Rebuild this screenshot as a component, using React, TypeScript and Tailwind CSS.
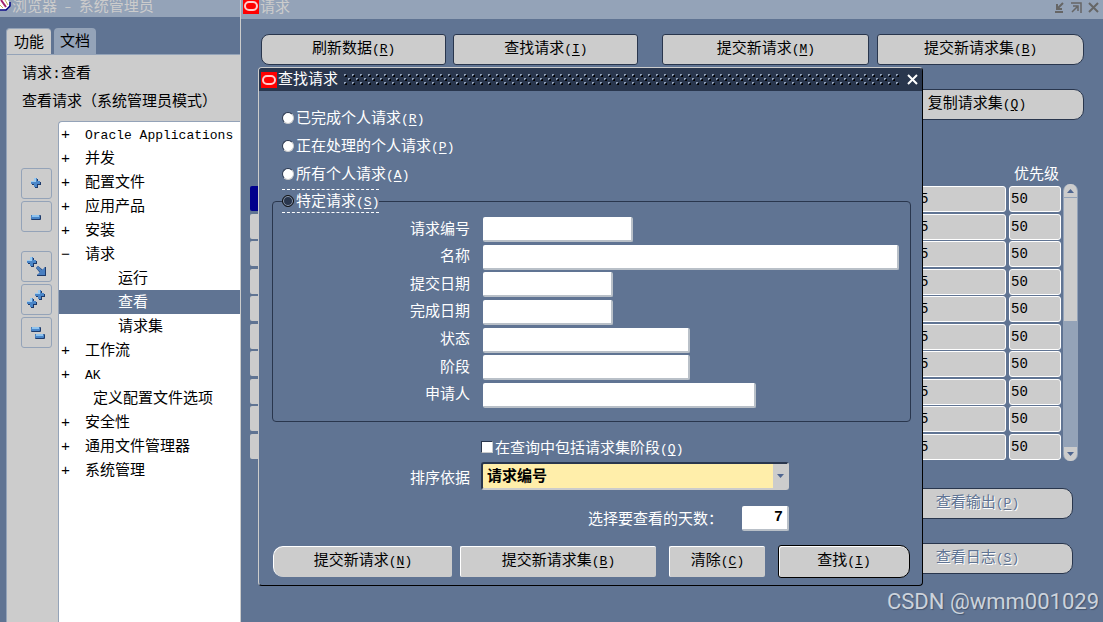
import { useState } from 'react';
import type { ReactNode } from 'react';

type TreeNode = {
  label: string;
  mark?: '+' | '−';
  level?: 1 | 2;
};

const tree: TreeNode[] = [
  { label: 'Oracle Applications', mark: '+' },
  { label: '并发', mark: '+' },
  { label: '配置文件', mark: '+' },
  { label: '应用产品', mark: '+' },
  { label: '安装', mark: '+' },
  { label: '请求', mark: '−' },
  { label: '运行', level: 2 },
  { label: '查看', level: 2 },
  { label: '请求集', level: 2 },
  { label: '工作流', mark: '+' },
  { label: 'AK', mark: '+' },
  { label: '定义配置文件选项', level: 1 },
  { label: '安全性', mark: '+' },
  { label: '通用文件管理器', mark: '+' },
  { label: '系统管理', mark: '+' },
];

const scopes = [
  { id: 'completed', label: '已完成个人请求', hotkey: 'R' },
  { id: 'running', label: '正在处理的个人请求', hotkey: 'P' },
  { id: 'all', label: '所有个人请求', hotkey: 'A' },
];

const fields = [
  { id: 'requestId', label: '请求编号', width: 'w-[150px]' },
  { id: 'name', label: '名称', width: 'w-[416px]' },
  { id: 'submitted', label: '提交日期', width: 'w-[130px]' },
  { id: 'finished', label: '完成日期', width: 'w-[130px]' },
  { id: 'status', label: '状态', width: 'w-[207px]' },
  { id: 'phase', label: '阶段', width: 'w-[207px]' },
  { id: 'requestor', label: '申请人', width: 'w-[273px]' },
];

const rows = Array.from({ length: 10 }, (_, i) => i);

function Hotkey({ char }: { char: string }) {
  return (
    <span className="text-[13px]">
      (<span className="underline underline-offset-2">{char}</span>)
    </span>
  );
}

function OracleIcon() {
  return (
    <svg width="16" height="16" viewBox="0 0 16 16" className="shrink-0">
      <rect width="16" height="16" fill="#f00" />
      <rect x="2" y="4" width="12" height="8" rx="4" fill="none" stroke="#fcc" strokeWidth="2" />
    </svg>
  );
}

function PlusShape({ x, y }: { x: number; y: number }) {
  return (
    <g transform={`translate(${x} ${y})`}>
      <path d="M4 1h3v3h3v3h-3v3h-3v-3h-3v-3h3z" fill="#1d3a6b" />
      <path d="M3 0h3v3h3v3h-3v3h-3v-3h-3v-3h3z" fill="#4a86c8" />
      <path d="M3 0h2v4h-5v-1h3z" fill="#9ccbf0" />
    </g>
  );
}

function MinusShape({ x, y }: { x: number; y: number }) {
  return (
    <g transform={`translate(${x} ${y})`}>
      <rect x="0" y="0" width="10" height="5" rx="1" fill="#1d3a6b" />
      <rect x="0" y="0" width="9" height="4" rx="1" fill="#4a86c8" />
      <rect x="1" y="0" width="7" height="2" fill="#8fc3ee" />
    </g>
  );
}

function ToolButton({ label, children }: { label: string; children: ReactNode }) {
  return (
    <button
      type="button"
      aria-label={label}
      className="w-[31px] h-[31px] border border-[#94a3b8] rounded-[3px] flex items-center justify-center"
    >
      <svg width="29" height="29" viewBox="0 0 29 29">
        {children}
      </svg>
    </button>
  );
}

function Navigator() {
  const [selected, setSelected] = useState('查看');

  return (
    <aside className="w-[240px] shrink-0 flex flex-col">
      <header className="h-[17px] bg-[#94a3b8] text-[#ccc] flex items-start gap-px">
        <svg width="11" height="11" viewBox="0 0 11 11" className="shrink-0">
          <path d="M0 0h8l2 3-1 5-4 2.500h-5z" fill="#fff" />
          <path d="M10 2v4l-4 4h-6" fill="none" stroke="#000080" strokeWidth="1.500" />
          <path d="M1 0l5 7" stroke="#a0206a" strokeWidth="2" />
          <path d="M5 0l3 5M0 5l3 3" stroke="#c9b458" />
        </svg>
        <h1 className="leading-4 whitespace-pre">
          浏览器<span className="text-[12px]"> – </span>系统管理员
        </h1>
      </header>

      <div className="flex-1 flex flex-col pl-1.5 pt-[11px]">
        <div role="tablist" className="flex gap-[3px] h-[26px]">
          <button
            type="button"
            role="tab"
            aria-selected="true"
            className="w-[45px] pt-1 bg-[#ccc] rounded-t-[4px] border-l border-t border-[#94a3b8]"
          >
            功能
          </button>
          <button type="button" role="tab" aria-selected="false" className="w-[42px] pt-1 bg-[#94a3b8] rounded-t-[4px]">
            文档
          </button>
        </div>

        <div className="flex-1 flex flex-col bg-[#ccc] border-l border-t border-[#94a3b8]">
          <div className="pl-[15px] pt-1.5 pb-1 leading-7">
            <p>请求:查看</p>
            <p>查看请求（系统管理员模式）</p>
          </div>

          <div className="flex-1 flex">
            <div className="w-[51px] shrink-0 pt-[47px] pl-3.5 flex flex-col gap-[19px]">
              <div className="flex flex-col gap-0.5">
                <ToolButton label="展开">
                  <PlusShape x={9} y={9} />
                </ToolButton>
                <ToolButton label="折叠">
                  <MinusShape x={9} y={13} />
                </ToolButton>
              </div>
              <div className="flex flex-col gap-0.5">
                <ToolButton label="展开分支">
                  <PlusShape x={5} y={5} />
                  <path d="M14 16l2-2 5 4 2-3h1v9h-9v-1l3-2z" fill="#1d3a6b" />
                  <path d="M14 16l2-2 4 4 3-3v8h-8l3-3z" fill="#4a7fc0" />
                </ToolButton>
                <ToolButton label="全部展开">
                  <PlusShape x={13} y={5} />
                  <PlusShape x={5} y={13} />
                </ToolButton>
                <ToolButton label="全部折叠">
                  <MinusShape x={9} y={9} />
                  <MinusShape x={13} y={16} />
                </ToolButton>
              </div>
            </div>

            <ul className="flex-1 bg-white border-l border-t border-[#94a3b8] rounded-tl-[4px]">
              {tree.map(node => (
                <li key={node.label} className="h-6">
                  <button
                    type="button"
                    onClick={() => setSelected(node.label)}
                    className={`w-full h-full pt-1 flex items-center whitespace-nowrap text-left ${
                      node.label === selected ? 'bg-[#607493] text-white' : ''
                    }`}
                  >
                    <span
                      className={`pl-0.5 shrink-0 ${
                        node.level === 2 ? 'w-[59px]' : node.level === 1 ? 'w-[34px]' : 'w-[26px]'
                      }`}
                    >
                      {node.mark}
                    </span>
                    <span className={/^[A-Z]/.test(node.label) ? 'text-[13px]' : ''}>{node.label}</span>
                  </button>
                </li>
              ))}
            </ul>
          </div>
        </div>
      </div>
    </aside>
  );
}

function RequestsWindow() {
  const top = 'flex-1 h-[31px] bg-[#ccc] border border-[#29364d]';
  const disabled =
    'h-[31px] w-[191px] bg-[#ccc] border border-[#29364d] rounded-[3px] rounded-r-[10px] text-[#607493] [text-shadow:1px_1px_0_#fff]';

  return (
    <main className="flex-1 min-w-0 flex flex-col border-l border-[#ccc]">
      <header className="h-[19px] bg-[#94a3b8] text-[#ccc] flex items-start pl-0.5 pr-1 overflow-hidden">
        <div className="-mt-0.5 flex gap-px">
          <OracleIcon />
          <h2 className="leading-[22px]">请求</h2>
        </div>
        <div className="ml-auto flex gap-1.5 pt-0.5 text-[#666]">
          <button type="button" aria-label="最小化">
            <svg width="11" height="11" viewBox="0 0 11 11" fill="none" stroke="currentColor" strokeWidth="2">
              <path d="M1 10h8M9 1l-5 5M3 2v5h5" />
            </svg>
          </button>
          <button type="button" aria-label="最大化">
            <svg width="11" height="11" viewBox="0 0 11 11" fill="none" stroke="currentColor" strokeWidth="2">
              <path d="M0 1h10v10M1 10l5-5M2 4h5v5" strokeWidth="1.500" />
            </svg>
          </button>
          <button type="button" aria-label="关闭">
            <svg width="11" height="11" viewBox="0 0 11 11" fill="none" stroke="currentColor" strokeWidth="2">
              <path d="M1 1l9 9M10 1l-9 9" />
            </svg>
          </button>
        </div>
      </header>

      <div className="pl-5 pr-[19px] pt-[15px] flex gap-6">
        <div className="flex-[377] flex gap-[7px]">
          <button type="button" className={`${top} rounded-[3px] rounded-l-[8px]`}>
            刷新数据<Hotkey char="R" />
          </button>
          <button type="button" className={`${top} rounded-[3px]`}>
            查找请求<Hotkey char="I" />
          </button>
        </div>
        <div className="flex-[421] flex gap-2">
          <button type="button" className={`${top} rounded-[3px]`}>
            提交新请求<Hotkey char="M" />
          </button>
          <button type="button" className={`${top} rounded-[3px] rounded-r-[10px]`}>
            提交新请求集<Hotkey char="B" />
          </button>
        </div>
      </div>

      <div className="pr-[19px] pt-6 flex justify-end">
        <button
          type="button"
          className="w-[214px] h-[31px] bg-[#ccc] border border-[#29364d] rounded-[3px] rounded-r-[10px]"
        >
          复制请求集<Hotkey char="Q" />
        </button>
      </div>

      <div className="mt-11 pl-[9px] pr-[25px] flex gap-0.5">
        <table className="flex-1 table-fixed border-separate border-spacing-0">
          <thead>
            <tr className="h-5 text-white">
              <th className="w-3"></th>
              <th></th>
              <th className="w-[90px]"></th>
              <th className="w-[55px] p-0 pl-1.5 pt-0.5 font-normal">优先级</th>
            </tr>
          </thead>
          <tbody>
            {rows.map(i => (
              <tr key={i} className={i % 2 ? 'h-7' : 'h-[27px]'}>
                <td className="p-0 pb-0.5">
                  <div className={`h-[25px] rounded-l-[2px] ${i === 0 ? 'bg-[#00008c]' : 'bg-[#ccc]'}`} />
                </td>
                <td></td>
                <td className="p-0 pb-px">
                  <input
                    readOnly
                    aria-label="参数"
                    defaultValue="5"
                    className="block w-full h-[26px] pl-[3px] text-[14px] bg-[#ccc] border border-white rounded-[3px]"
                  />
                </td>
                <td className="p-0 pb-px pl-[3px]">
                  <input
                    readOnly
                    aria-label="优先级"
                    defaultValue="50"
                    className="block w-full h-[26px] pl-px text-[14px] bg-[#ccc] border border-white rounded-[3px]"
                  />
                </td>
              </tr>
            ))}
          </tbody>
        </table>
        <div className="w-[15px] mt-5 flex flex-col bg-[#94a3b8] rounded-[7px] overflow-hidden border-x border-[#94a3b8]">
          <button
            type="button"
            aria-label="向上"
            className="h-3.5 bg-[#ccc] border-b border-[#94a3b8] flex items-center justify-center"
          >
            <svg width="7" height="4" viewBox="0 0 7 4" fill="#4f6690">
              <path d="M3.500 0l3.500 4h-7z" />
            </svg>
          </button>
          <div className="h-[123px] bg-[#ccc]" />
          <button type="button" aria-label="向下" className="mt-auto h-3.5 bg-[#ccc] flex items-center justify-center">
            <svg width="7" height="4" viewBox="0 0 7 4" fill="#4f6690">
              <path d="M3.500 4l3.500-4h-7z" />
            </svg>
          </button>
        </div>
      </div>

      <div className="pt-[27px] pr-[30px] flex flex-col items-end gap-6">
        <button type="button" aria-disabled="true" className={disabled}>
          查看输出<Hotkey char="P" />
        </button>
        <button type="button" aria-disabled="true" className={disabled}>
          查看日志<Hotkey char="S" />
        </button>
      </div>
    </main>
  );
}

function FindDialog() {
  const [scope, setScope] = useState('specific');

  const radio =
    'appearance-none w-3 h-3 mb-1 mr-0.5 rounded-full border border-[#29364d] border-r-[#ccc] border-b-[#ccc] bg-white checked:bg-[#29364d] checked:border-[#111] checked:shadow-[inset_0_0_0_1px_#94a3b8]';
  const textbox =
    'h-[25px] bg-white text-black border-r-2 border-b-2 border-r-[#b9c0c8] border-b-[#b9c0c8] rounded-[2px] px-1 outline-none';
  const action = 'h-[31px] bg-[#ccc] text-black border-l border-t border-white rounded-[2px]';

  return (
    <section
      role="dialog"
      aria-label="查找请求"
      className="absolute left-[258px] top-[67px] w-[665px] bg-[#607493] text-white border border-l-[#ccc] border-t-[#ccc] border-r-black border-b-black rounded-[4px]"
    >
      <header className="h-[23px] pl-0.5 pr-1 bg-[#29364d] rounded-t-[3px] flex items-center">
        <OracleIcon />
        <h2 className="ml-px pt-[3px]">查找请求</h2>
        <svg height="11" className="flex-1 ml-1.5 mr-2">
          <defs>
            <pattern id="grip" width="8" height="8" patternUnits="userSpaceOnUse">
              <path d="M2 1h1v2h-2v-1h1zM6 5h1v2h-2v-1h1z" fill="#000" />
              <path d="M0 0h2v1h-1v1h-1zM4 4h2v1h-1v1h-1z" fill="#94a3b8" />
            </pattern>
          </defs>
          <rect width="100%" height="11" fill="url(#grip)" />
        </svg>
        <button type="button" aria-label="关闭">
          <svg width="11" height="11" viewBox="0 0 11 11" fill="none" stroke="#fff" strokeWidth="2">
            <path d="M1 1l9 9M10 1l-9 9" />
          </svg>
        </button>
      </header>

      <form onSubmit={e => e.preventDefault()} className="pt-3.5 pl-[13px] pr-[11px] pb-[7px]">
        {scopes.map(item => (
          <label key={item.id} className="h-7 pt-0.5 ml-2.5 flex items-center">
            <input
              type="radio"
              name="scope"
              checked={scope === item.id}
              onChange={() => setScope(item.id)}
              className={radio}
            />
            {item.label}
            <Hotkey char={item.hotkey} />
          </label>
        ))}

        <fieldset className="border border-[#29364d] rounded-[4px] pl-[9px] pb-3">
          <legend className="h-6 border-y border-dashed border-white">
            <label className="h-full pt-1 flex items-center">
              <input
                type="radio"
                name="scope"
                checked={scope === 'specific'}
                onChange={() => setScope('specific')}
                className={radio}
              />
              特定请求
              <Hotkey char="S" />
            </label>
          </legend>
          <div className="h-[196px] grid grid-rows-7 pt-[3px]">
            {fields.map(field => (
              <div key={field.id} className="flex items-center">
                <label htmlFor={field.id} className="w-[188px] mr-[13px] pt-0.5 text-right">
                  {field.label}
                </label>
                <input id={field.id} type="text" className={`${textbox} ${field.width}`} />
              </div>
            ))}
          </div>
        </fieldset>

        <label className="mt-3 h-7 pt-1 ml-[209px] flex items-center">
          <input
            type="checkbox"
            className="appearance-none w-3 h-3 mb-1.5 mr-0.5 bg-white border border-[#29364d] border-r-[#ccc] border-b-[#ccc] checked:bg-[#29364d]"
          />
          在查询中包括请求集阶段
          <Hotkey char="Q" />
        </label>

        <div className="flex items-center">
          <label htmlFor="orderBy" className="w-[198px] mr-[11px] pt-2 text-right">
            排序依据
          </label>
          <div className="relative w-[308px]">
            <select
              id="orderBy"
              className="block appearance-none w-full h-7 pl-1 pt-1 bg-[#ffeeaa] text-black font-bold border-2 border-[#29364d] border-r-[#ccc] border-b-[#ccc] rounded-[3px]"
            >
              <option>请求编号</option>
            </select>
            <span className="absolute right-0.5 inset-y-0.5 w-3.5 bg-[#ccc] flex items-center justify-center pointer-events-none">
              <svg width="7" height="4" viewBox="0 0 7 4" fill="#4f6690">
                <path d="M3.500 4l3.500-4h-7z" />
              </svg>
            </span>
          </div>
        </div>

        <div className="mt-4 flex items-center pl-[316px]">
          <label htmlFor="days" className="w-[154px] pt-1">
            选择要查看的天数：
          </label>
          <input id="days" type="text" defaultValue="7" className={`${textbox} w-[47px] text-right font-bold`} />
        </div>

        <div className="mt-3.5 pl-px flex items-center">
          <button type="button" className={`${action} w-[179px] rounded-l-[10px]`}>
            提交新请求<Hotkey char="N" />
          </button>
          <button type="button" className={`${action} w-[196px] ml-2`}>
            提交新请求集<Hotkey char="B" />
          </button>
          <button type="reset" className={`${action} w-24 ml-[13px]`}>
            清除<Hotkey char="C" />
          </button>
          <button
            type="submit"
            className="w-[132px] h-[33px] ml-[13px] bg-[#ccc] text-black border border-black rounded-[3px] rounded-r-[10px] shadow-[inset_1px_1px_0_#fff]"
          >
            查找<Hotkey char="I" />
          </button>
        </div>
      </form>
    </section>
  );
}

export default function App() {
  return (
    <div className="relative min-h-screen flex overflow-hidden bg-[#607493] text-black text-[15px] leading-5 font-['Liberation_Mono','Noto_Sans_CJK_SC',monospace]">
      <Navigator />
      <RequestsWindow />
      <FindDialog />
      <p className="absolute right-1 bottom-1.5 text-[22px] leading-7 text-[#ccd3dc] font-['Roboto','Liberation_Sans',sans-serif] [text-shadow:1px_1px_1px_#44546e]">
        CSDN @wmm001029
      </p>
    </div>
  );
}
